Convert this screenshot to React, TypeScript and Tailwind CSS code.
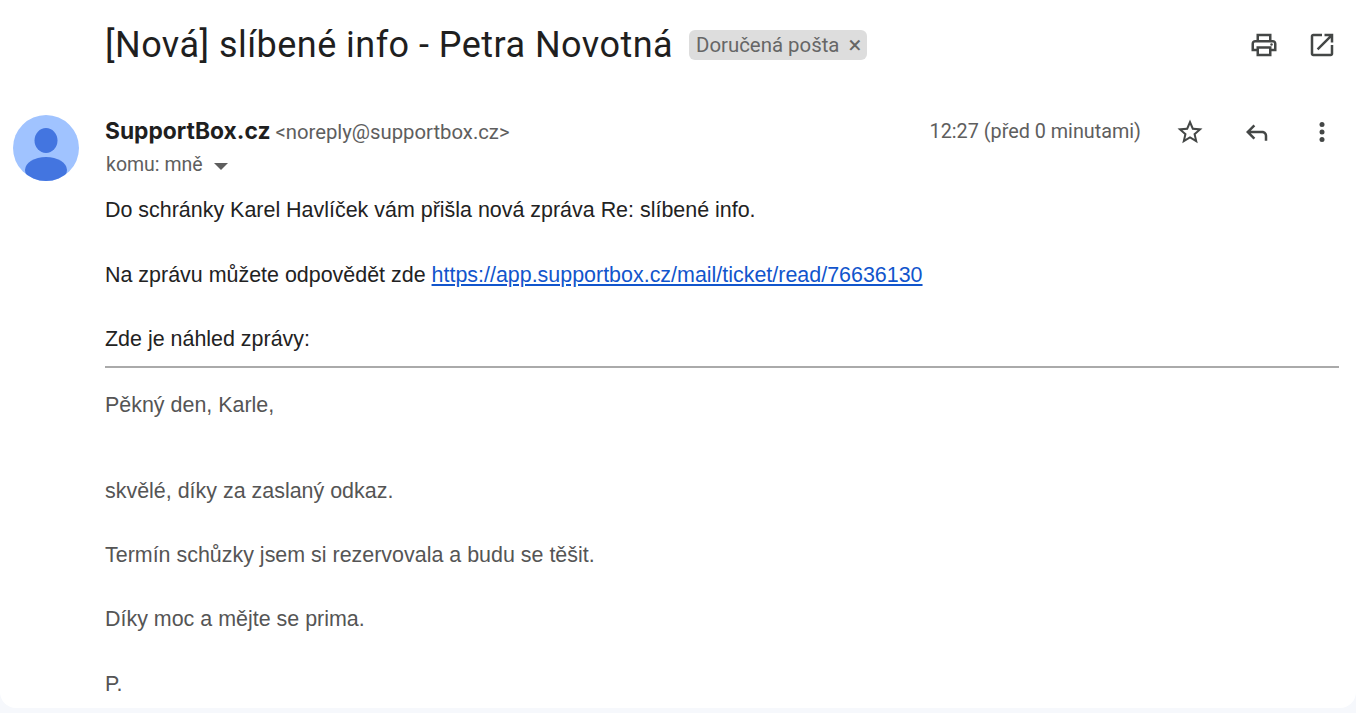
import type { ReactNode } from "react";

function Icon({ d, children, className }: { d?: string; children?: ReactNode; className?: string }) {
  return (
    <svg viewBox="0 0 24 24" fill="#444746" className={className ?? "w-[30px] h-[30px]"}>
      {d && <path d={d} />}
      {children}
    </svg>
  );
}

const printPath =
  "M19 8h-1V3H6v5H5c-1.66 0-3 1.34-3 3v6h4v4h12v-4h4v-6c0-1.66-1.34-3-3-3zM8 5h8v3H8V5zm8 12v2H8v-4h8v2zm2-2v-2H6v2H4v-4c0-.55.45-1 1-1h14c.55 0 1 .45 1 1v4h-2z";
const openPath =
  "M19 19H5V5h7V3H5c-1.11 0-2 .9-2 2v14c0 1.1.89 2 2 2h14c1.1 0 2-.9 2-2v-7h-2v7zM14 3v2h3.59l-9.83 9.83 1.41 1.41L19 6.41V10h2V3h-7z";
const starPath =
  "M22 9.24l-7.19-.62L12 2 9.19 8.63 2 9.24l5.46 4.73L5.82 21 12 17.27 18.18 21l-1.63-7.03L22 9.24zM12 15.4l-3.76 2.27 1-4.28-3.32-2.88 4.38-.38L12 6.1l1.71 4.04 4.38.38-3.32 2.88 1 4.28L12 15.4z";
const replyPath =
  "M21 19v-4c0-2.2-1.8-4-4-4H7.83l3.58-3.59L10 6l-6 6 6 6 1.41-1.41L7.83 13H17c1.1 0 2 .9 2 2v4h2z";

export default function App() {
  return (
    <div className="h-[713px] w-[1356px] overflow-hidden bg-[#f6f8fc] font-['Roboto',sans-serif]">
      <div className="h-[708px] overflow-hidden rounded-b-2xl bg-white">
        {/* Subject */}
        <div className="flex h-[90px] items-center pl-[105px] pr-[19px]">
          <h1 className="text-[36px] leading-[44px] tracking-[0.46px] text-[#1f1f1f]">
            [Nová] slíbené info - Petra Novotná
          </h1>
          <span className="ml-4 flex h-[30px] w-[178px] items-center rounded-md bg-[#dddddd] pl-[7px] text-[20.4px] text-[#666666]">
            Doručená pošta
            <span className="ml-[9px] text-[24px] leading-none">×</span>
          </span>
          <div className="ml-auto flex items-center gap-[28px]">
            <Icon d={printPath}>
              <circle cx="18" cy="11.5" r="1" />
            </Icon>
            <Icon d={openPath} />
          </div>
        </div>

        <div className="flex pl-[13px] pr-[17px] pt-[25px]">
          {/* Avatar */}
          <div className="h-[66px] w-[66px] shrink-0 overflow-hidden rounded-full">
            <svg viewBox="0 0 66 66" className="h-full w-full">
              <rect width="66" height="66" fill="#a0c3ff" />
              <ellipse cx="33" cy="25.5" rx="11.5" ry="12.5" fill="#4375e0" />
              <ellipse cx="33" cy="55" rx="21" ry="13" fill="#4375e0" />
            </svg>
          </div>

          <div className="ml-[26px] min-w-0 flex-1">
            {/* Sender row */}
            <div className="flex h-[33px] items-center">
              <span className="text-[22.8px] font-bold text-[#1f1f1f] font-['Inter','Roboto',sans-serif]">SupportBox.cz</span>
              <span className="ml-[5px] mt-[1px] text-[20.3px] text-[#5e5e5e]">&lt;noreply@supportbox.cz&gt;</span>
              <span className="ml-auto text-[19.8px] text-[#5e5e5e]">12:27 (před 0 minutami)</span>
              <div className="ml-[34px] flex items-center pr-[2px]">
                <Icon d={starPath} />
                <Icon d={replyPath} className="ml-[36px] h-[30px] w-[30px]" />
                <Icon className="ml-[36px] h-[30px] w-[30px]">
                  <circle cx="12" cy="6" r="2" />
                  <circle cx="12" cy="12" r="2" />
                  <circle cx="12" cy="18" r="2" />
                </Icon>
              </div>
            </div>
            <div className="mt-[5px] flex h-[24px] items-center pl-px text-[19.5px] text-[#5e5e5e]">
              komu: mně
              <span className="ml-[11px] mt-[3px] h-0 w-0 border-x-[7px] border-t-[7px] border-x-transparent border-t-[#5e5e5e]" />
            </div>

            {/* Body */}
            <div className="mt-[22px] text-[21.45px] leading-[23px] text-[#222222] font-['Liberation_Sans',Arial,sans-serif]">
              <p className="h-[23px]">Do schránky Karel Havlíček vám přišla nová zpráva Re: slíbené info.</p>
              <p className="mt-[42px] h-[23px]">
                Na zprávu můžete odpovědět zde{" "}
                <a href="#" className="text-[#1155cc] underline">
                  https://app.supportbox.cz/mail/ticket/read/76636130
                </a>
              </p>
              <p className="mt-[41px] h-[23px]">Zde je náhled zprávy:</p>
              <hr className="mt-[15px] border-t-2 border-[#aaaaaa]" />
              <div className="text-[#555555]">
                <p className="mt-[26px] h-[23px]">Pěkný den, Karle,</p>
                <p className="mt-[63px] h-[23px]">skvělé, díky za zaslaný odkaz.</p>
                <p className="mt-[41px] h-[23px]">Termín schůzky jsem si rezervovala a budu se těšit.</p>
                <p className="mt-[41px] h-[23px]">Díky moc a mějte se prima.</p>
                <p className="mt-[42px] h-[23px]">P.</p>
              </div>
            </div>
          </div>
        </div>
      </div>
    </div>
  );
}
